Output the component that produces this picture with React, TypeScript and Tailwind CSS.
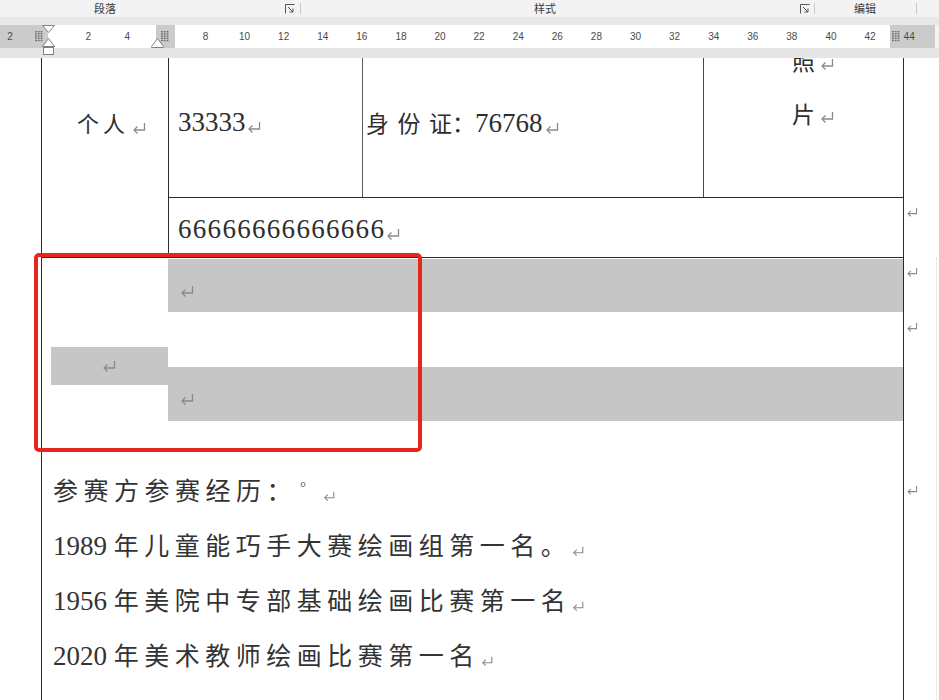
import React from 'react';

const rulerLabels = ['2', '', '2', '4', '', '8', '10', '12', '14', '16', '18', '20', '22', '24', '26', '28', '30', '32', '34', '36', '38', '40', '42', '44'];

function Ret({ className = '' }: { className?: string }) {
  return (
    <svg viewBox="0 0 16 14" className={`inline-block ${className}`} fill="none" stroke="#8a8a8a" strokeWidth={1.3}>
      <path d="M13 2V9H2.5" />
      <path d="M6 5.5L2.5 9L6 12.5" />
    </svg>
  );
}

function Launcher({ className = '' }: { className?: string }) {
  return (
    <svg viewBox="0 0 10 10" className={`h-[10px] w-[10px] shrink-0 ${className}`} fill="none" stroke="#555" strokeWidth={1}>
      <path d="M0.5 9.5V0.5H9.5" />
      <path d="M3 3L8 8M8 4.5V8H4.5" />
    </svg>
  );
}

function Grip({ className = '' }: { className?: string }) {
  const cells = [];
  for (let r = 0; r < 5; r++) {
    for (let c = 0; c < 3; c++) {
      cells.push(<rect key={`${r}-${c}`} x={c * 2.8} y={r * 2.2} width={1.8} height={1.4} fill="#6f6f6f" />);
    }
  }
  return (
    <svg viewBox="0 0 8 11" className={`absolute h-[11px] w-[8px] ${className}`}>
      {cells}
    </svg>
  );
}

function Chrome() {
  return (
    <div className="relative shrink-0">
      <div className="flex h-[17px] items-start overflow-hidden bg-[#f3f3f3] font-['Noto_Sans_CJK_SC',sans-serif] text-[11px] leading-none text-[#3a3a3a]">
        <span className="ml-[94px] mt-[3px]">段落</span>
        <Launcher className="ml-[169px] mt-[4px]" />
        <span className="ml-[5px] mt-[3px] h-[11px] w-px bg-[#c9c9c9]" />
        <span className="ml-[233px] mt-[3px]">样式</span>
        <Launcher className="ml-[244px] mt-[4px]" />
        <span className="ml-[4px] mt-[3px] h-[11px] w-px bg-[#c9c9c9]" />
        <span className="ml-[39px] mt-[3px]">编辑</span>
        <span className="ml-[40px] mt-[3px] h-[11px] w-px bg-[#c9c9c9]" />
      </div>
      <div className="h-[8px] bg-[#e8e8e8]" />
      <div className="relative flex h-[23px]">
        <div className="w-[48px] bg-[#cbcbcb]" />
        <div className="w-[108px] bg-white" />
        <div className="w-[19px] bg-[#cbcbcb]" />
        <div className="w-[715px] bg-white" />
        <div className="w-[45px] bg-[#cbcbcb]" />
        <div className="flex-1 bg-[#f3f3f3]" />
        <div className="absolute left-[-9.55px] top-0 flex h-full items-center font-['Liberation_Sans',Arial,sans-serif] text-[10px] text-[#4a4a4a]">
          {rulerLabels.map((label, i) => (
            <span key={i} className="flex w-[39.1px] justify-center">{label}</span>
          ))}
        </div>
        <Grip className="left-[35px] top-[6px]" />
        <Grip className="left-[161px] top-[6px]" />
        <Grip className="left-[892px] top-[6px]" />
      </div>
      <div className="h-[10px] bg-[#e6e6e6]" />
      {/* indent markers */}
      <svg viewBox="0 0 13 31" className="absolute left-[42px] top-[25px] h-[31px] w-[13px]" fill="#fff" stroke="#808080" strokeWidth={1}>
        <path d="M0.5 0.5H12.5L6.5 7.5Z" />
        <path d="M6.5 13.5L12.5 21.5H0.5Z" />
        <rect x={1.5} y={22.5} width={10} height={7} />
      </svg>
      <svg viewBox="0 0 13 10" className="absolute left-[151px] top-[38px] h-[10px] w-[13px]" fill="#fff" stroke="#808080" strokeWidth={1}>
        <path d="M6.5 0.5L12.5 8.5V9.5H0.5V8.5Z" />
      </svg>
    </div>
  );
}

const serif = "font-['Liberation_Serif','Noto_Sans_CJK_SC',serif]";

export default function App() {
  return (
    <div className={`flex h-[700px] w-[939px] flex-col overflow-hidden bg-white ${serif} text-[#2e2e2e]`}>
      <Chrome />
      <div className="relative h-[642px] overflow-hidden bg-white">
        <div className="ml-[41px] flex h-[642px] w-[863px] flex-col border-x border-[#2b2b2b]">
          {/* row group 1 */}
          <div className="flex h-[200px] shrink-0 border-b border-[#2b2b2b]">
            <div className="w-[126px] shrink-0 pl-[35px] pt-[49px] leading-[30px]">
              <span className="font-['Noto_Sans_CJK_SC',sans-serif] text-[22px] tracking-[4px]">个</span>
              <span className="font-['Noto_Sans_CJK_SC',sans-serif] text-[22px]">人</span>
              <Ret className="ml-[6px] h-[14px] w-[17px]" />
            </div>
            <div className="flex flex-1 flex-col border-l border-[#2b2b2b]">
              <div className="flex h-[140px] border-b border-[#2b2b2b]">
                <div className="w-[193px] shrink-0 pl-[9px] pt-[49px] leading-[30px]">
                  <span className="text-[27px]">33333</span>
                  <Ret className="h-[14px] w-[17px]" />
                </div>
                <div className="w-[341px] shrink-0 border-l border-[#5a5a5a] pl-[3px] pt-[49px] leading-[30px]">
                  <span className="font-['Noto_Sans_CJK_SC',sans-serif] text-[23px] tracking-[8.5px]">身份</span>
                  <span className="font-['Noto_Sans_CJK_SC',sans-serif] text-[23px]">证：</span>
                  <span className="text-[27px]">76768</span>
                  <Ret className="ml-[1px] h-[14px] w-[17px]" />
                </div>
                <div className="flex-1 border-l border-[#4a4a4a] pl-[88px] font-['Noto_Sans_CJK_SC',sans-serif] text-[23px] leading-[30px]">
                  <div className="-mt-[13px]">
                    照<Ret className="ml-[4px] h-[14px] w-[17px]" />
                  </div>
                  <div className="mt-[23px]">
                    片<Ret className="ml-[4px] h-[14px] w-[17px]" />
                  </div>
                </div>
              </div>
              <div className="flex-1 pl-[9px] pt-[16px] leading-[30px]">
                <span className="text-[27px] tracking-[1.3px]">66666666666666</span>
                <Ret className="h-[14px] w-[17px]" />
              </div>
            </div>
          </div>
          {/* row group 2 */}
          <div className="flex h-[192px] shrink-0">
            <div className="w-[126px] shrink-0 pl-[9px] pt-[89px]">
              <div className="flex h-[38px] items-center justify-center bg-[#c6c6c6]">
                <Ret className="h-[14px] w-[17px]" />
              </div>
            </div>
            <div className="flex flex-1 flex-col pt-[1px]">
              <div className="flex h-[53px] items-center bg-[#c6c6c6] pl-[11px] pt-[10px]">
                <Ret className="h-[14px] w-[17px]" />
              </div>
              <div className="h-[55px]" />
              <div className="flex h-[54px] items-center bg-[#c6c6c6] pl-[11px] pt-[10px]">
                <Ret className="h-[14px] w-[17px]" />
              </div>
            </div>
          </div>
          {/* experience text */}
          <div className="pl-[11px] pt-[12px] text-[#333]">
            <div className="h-[55px] whitespace-nowrap leading-[55px]">
              <span className="font-['Noto_Sans_CJK_SC',sans-serif] text-[25px] tracking-[5.5px]">参赛方参赛经历：</span>
              <span className="relative -top-[8px] ml-[3px] text-[15px] text-[#555]">°</span>
              <Ret className="ml-[16px] h-[12px] w-[15px]" />
            </div>
            <div className="h-[55px] whitespace-nowrap leading-[55px]">
              <span className="text-[27px]">1989 </span>
              <span className="font-['Noto_Sans_CJK_SC',sans-serif] text-[25px] tracking-[5.5px]">年儿童能巧手大赛绘画组第一名。</span>
              <Ret className="h-[12px] w-[15px]" />
            </div>
            <div className="h-[55px] whitespace-nowrap leading-[55px]">
              <span className="text-[27px]">1956 </span>
              <span className="font-['Noto_Sans_CJK_SC',sans-serif] text-[25px] tracking-[5.5px]">年美院中专部基础绘画比赛第一名</span>
              <Ret className="h-[12px] w-[15px]" />
            </div>
            <div className="h-[55px] whitespace-nowrap leading-[55px]">
              <span className="text-[27px]">2020 </span>
              <span className="font-['Noto_Sans_CJK_SC',sans-serif] text-[25px] tracking-[5.5px]">年美术教师绘画比赛第一名</span>
              <Ret className="h-[12px] w-[15px]" />
            </div>
          </div>
        </div>
        {/* end-of-row marks outside the table */}
        <Ret className="absolute left-[906px] top-[148px] h-[12px] w-[13px]" />
        <Ret className="absolute left-[906px] top-[208px] h-[12px] w-[13px]" />
        <Ret className="absolute left-[906px] top-[263px] h-[12px] w-[13px]" />
        <Ret className="absolute left-[906px] top-[426px] h-[12px] w-[13px]" />
        <div className="absolute bottom-0 right-[2px] top-[200px] border-l border-dotted border-[#dedede]" />
        {/* highlight box */}
        <div className="absolute left-[34px] top-[195px] h-[199px] w-[388px] rounded-[5px] border-[4px] border-[#e5261f]" />
      </div>
    </div>
  );
}
